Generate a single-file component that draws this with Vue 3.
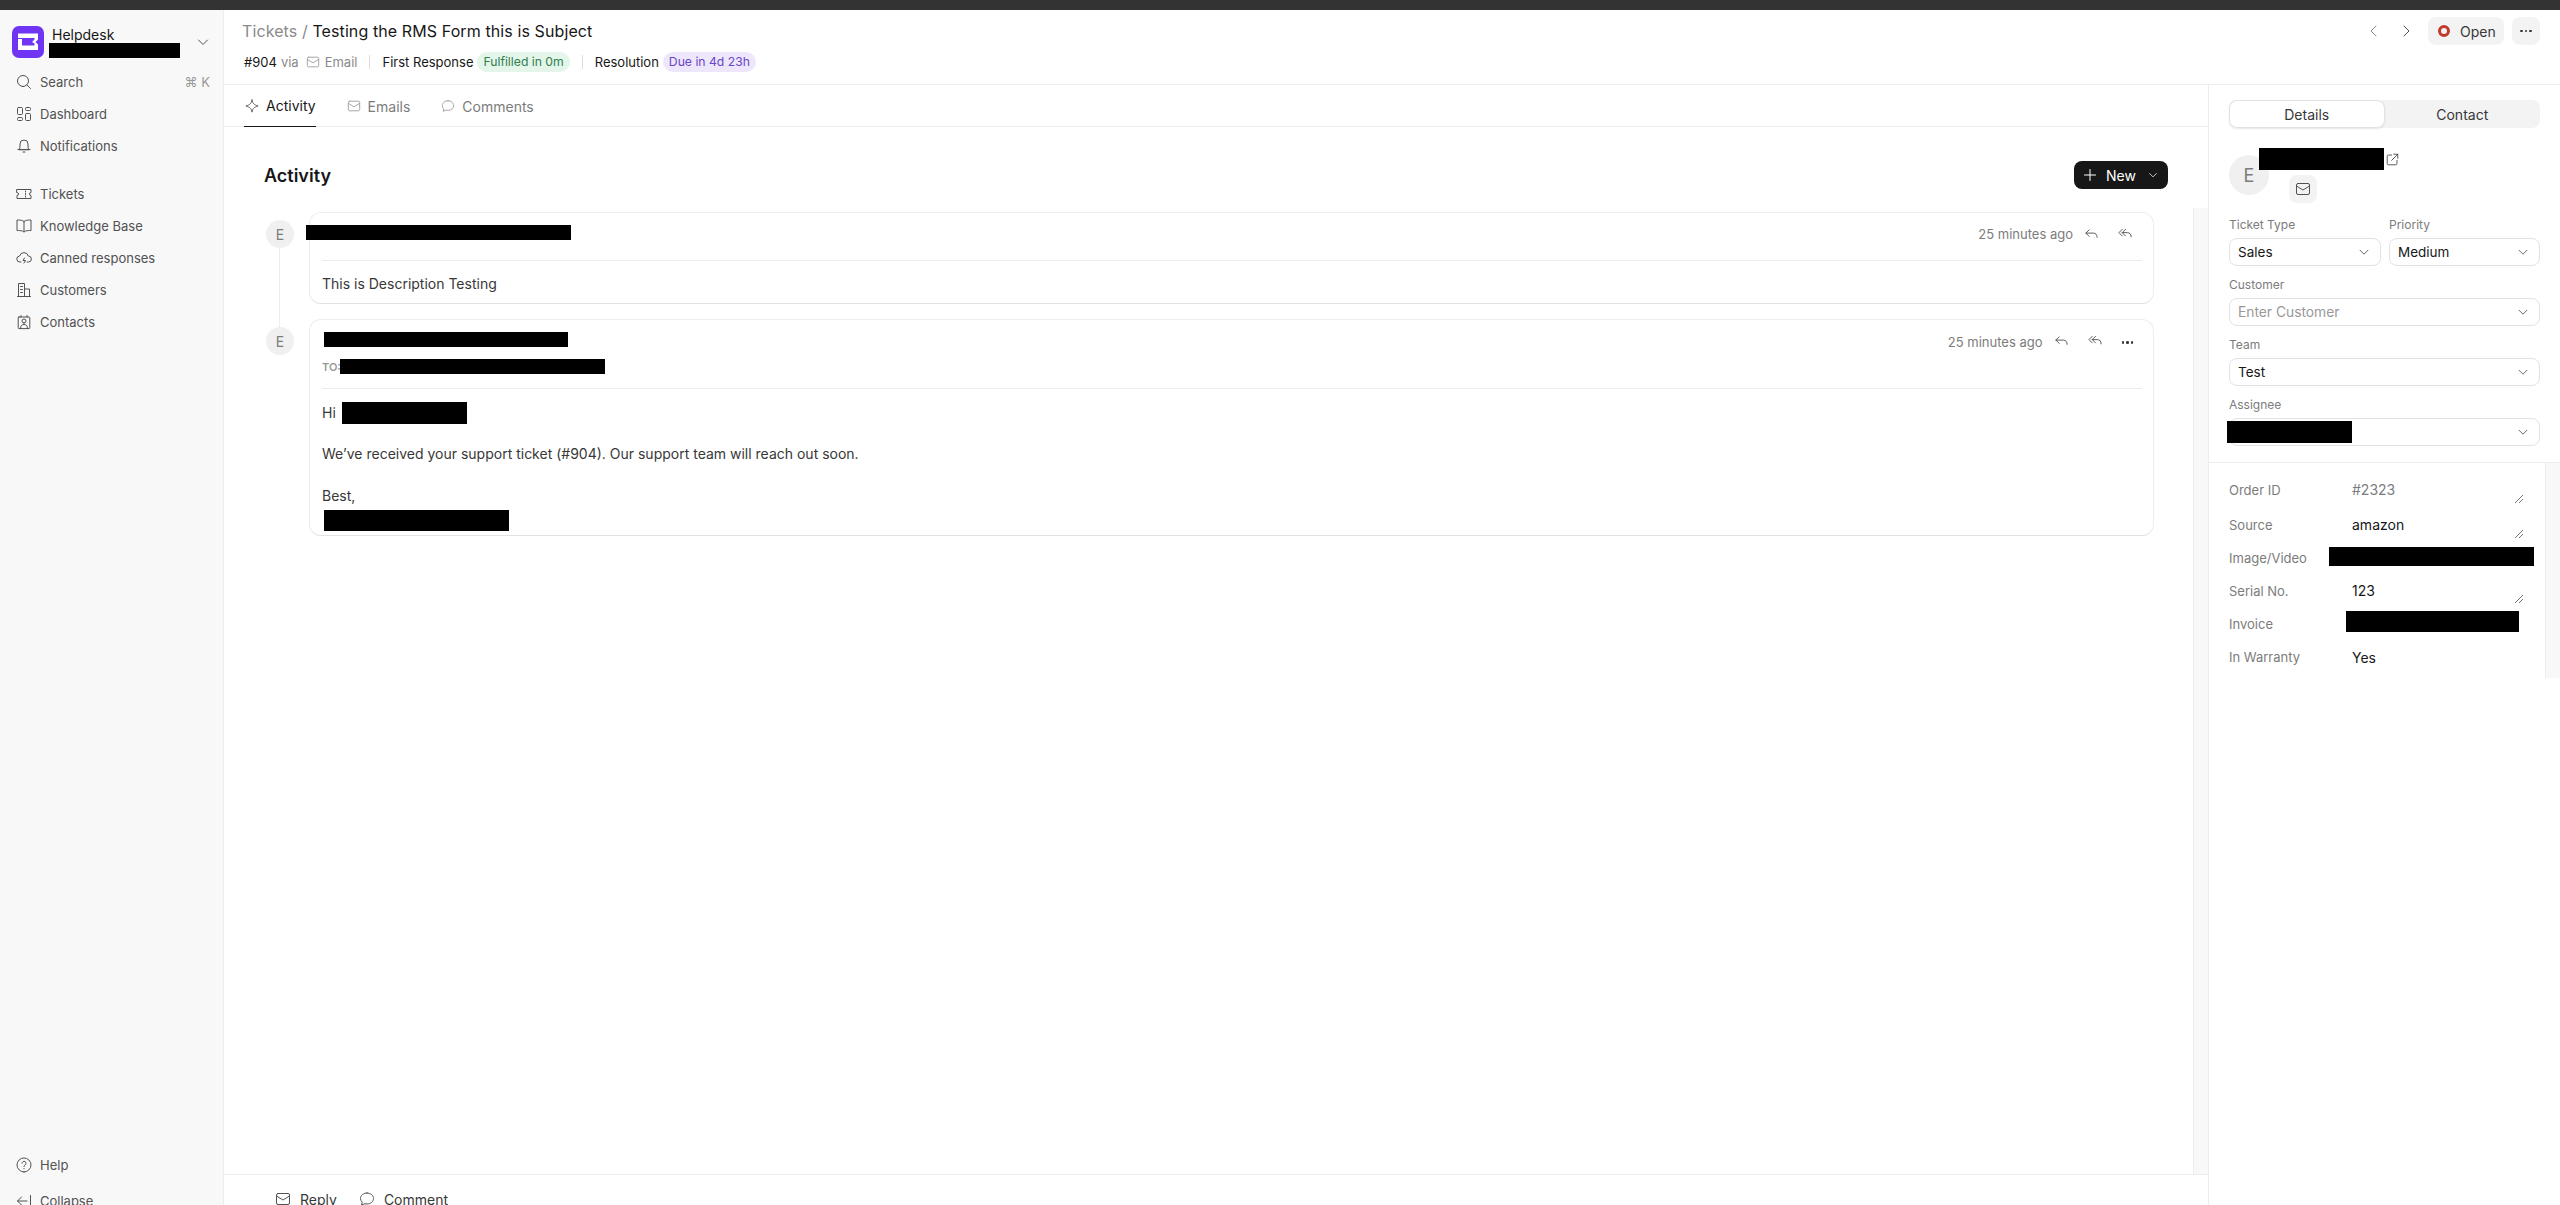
<script setup>
const icons = {
  search: "M7 12.5a5.5 5.5 0 1 0 0-11 5.5 5.5 0 0 0 0 11ZM11 11l3.5 3.5",
  dashboard: "M2.5 1.5h3a1 1 0 0 1 1 1v5a1 1 0 0 1-1 1h-3a1 1 0 0 1-1-1v-5a1 1 0 0 1 1-1ZM10.5 1.5h3a1 1 0 0 1 1 1v1a1 1 0 0 1-1 1h-3a1 1 0 0 1-1-1v-1a1 1 0 0 1 1-1ZM2.5 11.5h3a1 1 0 0 1 1 1v1a1 1 0 0 1-1 1h-3a1 1 0 0 1-1-1v-1a1 1 0 0 1 1-1ZM10.5 7.5h3a1 1 0 0 1 1 1v5a1 1 0 0 1-1 1h-3a1 1 0 0 1-1-1v-5a1 1 0 0 1 1-1Z",
  bell: "M3 11.5c.8-.8 1-1.8 1-3.5V6a4 4 0 0 1 8 0v2c0 1.7.2 2.7 1 3.5ZM2 11.5h12M7 14h2",
  ticket: "M1 3.5h14v3a1.5 1.5 0 0 0 0 3v3H1v-3a1.5 1.5 0 0 0 0-3ZM9.5 5v1M9.5 7.5v1M9.5 10v1",
  book: "M8 3.5C7 2.5 5.5 2 1 2v10.5c4.5 0 6 .5 7 1.5 1-1 2.5-1.5 7-1.5V2C10.5 2 9 2.5 8 3.5ZM8 3.5V14",
  cloud: "M5 12H4a3 3 0 0 1-.4-6A4.5 4.5 0 0 1 12.3 6a3 3 0 0 1 .2 6H11M8.5 8 7 10.5h2.5L8 13",
  building: "M2.5 14.5v-13h6v13M8.5 7h5v7.5M1.5 14.5h13M4.5 4.5h2M4.5 7.5h2M4.5 10.5h2",
  contacts: "M3 3h10a.8.8 0 0 1 .8.8v10a.8.8 0 0 1-.8.8H3a.8.8 0 0 1-.8-.8v-10A.8.8 0 0 1 3 3ZM5 1.5V3M11 1.5V3M8 9a2 2 0 1 0 0-4 2 2 0 0 0 0 4ZM4.5 14.5c0-3 1.5-4 3.5-4s3.5 1 3.5 4",
  help: "M8 15A7 7 0 1 0 8 1a7 7 0 0 0 0 14ZM6 6.2a2 2 0 1 1 3 1.8c-.7.4-1 .9-1 1.5M8 11.5v.3",
  collapse: "M14.5 2.5v11M11 8H1.5M5.5 4l-4 4 4 4",
  mail: "M3 2.5h10A1.5 1.5 0 0 1 14.5 4v8a1.5 1.5 0 0 1-1.5 1.5H3A1.5 1.5 0 0 1 1.5 12V4A1.5 1.5 0 0 1 3 2.5ZM1.5 5 8 9l6.5-4",
  comment: "M8 2c3.6 0 6.5 2.4 6.5 5.5S11.6 13 8 13c-.7 0-1.4-.1-2-.3L2.5 14l.7-2.9A5.2 5.2 0 0 1 1.5 7.5C1.5 4.4 4.4 2 8 2Z",
  sparkle: "M8 1c.5 3.8 2 5.5 7 7-5 1.5-6.5 3.2-7 7-.5-3.8-2-5.5-7-7 5-1.5 6.5-3.2 7-7Z",
  reply: "M5.5 3 2 6.5 5.5 10M2 6.5h8c2.5 0 4 1.7 4 4.5",
  replyAll: "M4.5 2.5 1 6l3.5 3.5M8 2.5 4.5 6 8 9.5M4.5 6H10c2.5 0 4 1.7 4 4.5",
  external: "M7 2.5H3A1.5 1.5 0 0 0 1.5 4v9A1.5 1.5 0 0 0 3 14.5h9a1.5 1.5 0 0 0 1.5-1.5V9M9.5 1.5h5v5M14.5 1.5 7 9",
  down: "M3.5 6 8 10.5 12.5 6",
  left: "M10 3 5 8l5 5",
  right: "M6 3l5 5-5 5",
  plus: "M8 2.5v11M2.5 8h11",
};

const topNav = [
  { label: "Dashboard", icon: "dashboard" },
  { label: "Notifications", icon: "bell" },
];
const mainNav = [
  { label: "Tickets", icon: "ticket" },
  { label: "Knowledge Base", icon: "book" },
  { label: "Canned responses", icon: "cloud" },
  { label: "Customers", icon: "building" },
  { label: "Contacts", icon: "contacts" },
];
</script>

<template>
  <div class="app">
    <div class="topbar"></div>
    <div class="layout">
      <aside class="sidebar">
        <div class="brand">
          <svg class="logo" viewBox="0 0 32 32">
            <rect width="32" height="32" rx="7" fill="#7034f5" />
            <path fill="#fff" d="M6 7.5h20v6L23.5 16l2.5 2.5V24H6V13h4v6.5h12.5v-2L20 16l2.5-2.500V12H6Z" />
          </svg>
          <div class="brand-text">
            <div class="brand-name">Helpdesk</div>
            <div class="redact brand-redact"></div>
          </div>
          <svg class="ic ic-sm" viewBox="0 0 16 16"><path :d="icons.down" /></svg>
        </div>
        <div class="nav-item">
          <svg class="ic" viewBox="0 0 16 16"><path :d="icons.search" /></svg>
          <span>Search</span>
          <span class="kbd">⌘ K</span>
        </div>
        <div v-for="n in topNav" :key="n.label" class="nav-item">
          <svg class="ic" viewBox="0 0 16 16"><path :d="icons[n.icon]" /></svg>
          <span>{{ n.label }}</span>
        </div>
        <div class="nav-group">
          <div v-for="n in mainNav" :key="n.label" class="nav-item">
            <svg class="ic" viewBox="0 0 16 16"><path :d="icons[n.icon]" /></svg>
            <span>{{ n.label }}</span>
          </div>
        </div>
        <div class="nav-bottom">
          <div class="nav-item">
            <svg class="ic" viewBox="0 0 16 16"><path :d="icons.help" /></svg>
            <span>Help</span>
          </div>
          <div class="nav-item">
            <svg class="ic" viewBox="0 0 16 16"><path :d="icons.collapse" /></svg>
            <span>Collapse</span>
          </div>
        </div>
      </aside>

      <div class="page">
        <header class="header">
          <div class="header-left">
            <div class="crumbs"><span class="muted">Tickets /</span> Testing the RMS Form this is Subject</div>
            <div class="meta">
              <span class="dark">#904</span>
              <span class="muted via">via</span>
              <svg class="ic ic-mail muted-ic" viewBox="0 0 16 16"><path :d="icons.mail" /></svg>
              <span class="muted">Email</span>
              <span class="sep"></span>
              <span class="dark">First Response</span>
              <span class="pill green">Fulfilled in 0m</span>
              <span class="sep"></span>
              <span class="dark">Resolution</span>
              <span class="pill purple">Due in 4d 23h</span>
            </div>
          </div>
          <div class="header-right">
            <svg class="ic nav-arrow light" viewBox="0 0 16 16"><path :d="icons.left" /></svg>
            <svg class="ic nav-arrow last" viewBox="0 0 16 16"><path :d="icons.right" /></svg>
            <div class="status-btn"><span class="status-dot"></span>Open</div>
            <div class="more-btn"><span class="dots"><i></i><i></i><i></i></span></div>
          </div>
        </header>

        <div class="body">
          <section class="content">
            <nav class="tabs">
              <div class="tab active">
                <svg class="ic" viewBox="0 0 16 16"><path :d="icons.sparkle" /></svg>Activity
              </div>
              <div class="tab">
                <svg class="ic muted-ic" viewBox="0 0 16 16"><path :d="icons.mail" /></svg>Emails
              </div>
              <div class="tab">
                <svg class="ic muted-ic" viewBox="0 0 16 16"><path :d="icons.comment" /></svg>Comments
              </div>
            </nav>

            <div class="scroll-wrap">
              <div class="activity">
                <div class="activity-head">
                  <h2>Activity</h2>
                  <div class="new-btn">
                    <svg class="ic" viewBox="0 0 16 16"><path :d="icons.plus" /></svg>
                    <span>New</span>
                    <svg class="ic ic-xs" viewBox="0 0 16 16"><path :d="icons.down" /></svg>
                  </div>
                </div>

                <div class="timeline">
                  <div class="entry first">
                    <div class="avatar">E</div>
                    <div class="card">
                      <div class="card-head">
                        <div class="redact from-redact-a"></div>
                        <span class="time">25 minutes ago</span>
                        <svg class="ic act" viewBox="0 0 16 16"><path :d="icons.reply" /></svg>
                        <svg class="ic act" viewBox="0 0 16 16"><path :d="icons.replyAll" /></svg>
                      </div>
                      <div class="card-body short">This is Description Testing</div>
                    </div>
                  </div>

                  <div class="entry">
                    <div class="avatar">E</div>
                    <div class="card">
                      <div class="card-head tall">
                        <div class="from-col">
                          <div class="redact from-redact-b"></div>
                          <div class="to-row"><span class="to">TO:</span><div class="redact to-redact"></div></div>
                        </div>
                        <span class="time">25 minutes ago</span>
                        <svg class="ic act" viewBox="0 0 16 16"><path :d="icons.reply" /></svg>
                        <svg class="ic act" viewBox="0 0 16 16"><path :d="icons.replyAll" /></svg>
                        <span class="dots act-dots"><i></i><i></i><i></i></span>
                      </div>
                      <div class="card-body">
                        <div class="hi-row"><span class="hi">Hi</span><div class="redact hi-redact"></div></div>
                        <p>We’ve received your support ticket (#904). Our support team will reach out soon.</p>
                        <p class="best">Best,</p>
                        <div class="redact sign-redact"></div>
                      </div>
                    </div>
                  </div>
                </div>
              </div>
              <div class="track"></div>
            </div>

            <footer class="composer">
              <div class="composer-btn">
                <svg class="ic" viewBox="0 0 16 16"><path :d="icons.mail" /></svg>Reply
              </div>
              <div class="composer-btn">
                <svg class="ic" viewBox="0 0 16 16"><path :d="icons.comment" /></svg>Comment
              </div>
            </footer>
          </section>

          <aside class="details">
            <div class="details-top">
              <div class="switch">
                <div class="switch-item on">Details</div>
                <div class="switch-item">Contact</div>
              </div>
              <div class="contact">
                <div class="contact-avatar">E</div>
                <div class="contact-main">
                  <div class="contact-name">
                    <div class="redact name-redact"></div>
                    <svg class="ic ic-ext" viewBox="0 0 16 16"><path :d="icons.external" /></svg>
                  </div>
                  <div class="mail-btn">
                    <svg class="ic" viewBox="0 0 16 16"><path :d="icons.mail" /></svg>
                  </div>
                </div>
              </div>
              <div class="form-grid">
                <label class="field">
                  <span class="label">Ticket Type</span>
                  <div class="select"><span>Sales</span><svg class="ic ic-sel" viewBox="0 0 16 16"><path :d="icons.down" /></svg></div>
                </label>
                <label class="field">
                  <span class="label">Priority</span>
                  <div class="select"><span>Medium</span><svg class="ic ic-sel" viewBox="0 0 16 16"><path :d="icons.down" /></svg></div>
                </label>
                <label class="field wide">
                  <span class="label">Customer</span>
                  <div class="select"><span class="placeholder">Enter Customer</span><svg class="ic ic-sel" viewBox="0 0 16 16"><path :d="icons.down" /></svg></div>
                </label>
                <label class="field wide">
                  <span class="label">Team</span>
                  <div class="select"><span>Test</span><svg class="ic ic-sel" viewBox="0 0 16 16"><path :d="icons.down" /></svg></div>
                </label>
                <label class="field wide">
                  <span class="label">Assignee</span>
                  <div class="select">
                    <div class="redact assignee-redact"></div>
                    <svg class="ic ic-sel" viewBox="0 0 16 16"><path :d="icons.down" /></svg>
                  </div>
                </label>
              </div>
            </div>

            <div class="details-list">
              <div class="rows">
                <div class="row r-order">
                  <span class="label">Order ID</span><span class="value faded">#2323</span>
                  <span class="grip"></span>
                </div>
                <div class="row r-source">
                  <span class="label">Source</span><span class="value">amazon</span>
                  <span class="grip"></span>
                </div>
                <div class="row r-image">
                  <span class="label">Image/Video</span>
                  <div class="redact image-redact"></div>
                </div>
                <div class="row r-serial">
                  <span class="label">Serial No.</span><span class="value">123</span>
                  <span class="grip"></span>
                </div>
                <div class="row r-invoice">
                  <span class="label">Invoice</span>
                  <div class="redact invoice-redact"></div>
                </div>
                <div class="row r-warranty">
                  <span class="label">In Warranty</span><span class="value">Yes</span>
                </div>
              </div>
              <div class="list-track"></div>
            </div>
          </aside>
        </div>
      </div>
    </div>
  </div>
</template>

<style>
html,
body {
  margin: 0;
  height: 100%;
  overflow: hidden;
  background: #fff;
}
</style>

<style scoped>
* {
  box-sizing: border-box;
}

.app {
  height: 1205px;
  overflow: hidden;
  font-family: Inter, "Liberation Sans", sans-serif;
  font-size: 13px;
  color: #383838;
}

.topbar {
  height: 10px;
  background: #333;
}

.layout {
  display: flex;
  height: 1207px;
}

.ic {
  width: 16px;
  height: 16px;
  flex: none;
  fill: none;
  stroke: #525252;
  stroke-width: 1;
  stroke-linecap: round;
  stroke-linejoin: round;
}

.redact {
  background: #000;
  flex: none;
}

/* sidebar */
.sidebar {
  width: 224px;
  flex: none;
  display: flex;
  flex-direction: column;
  background: #f8f8f8;
  border-right: 1px solid #ededed;
  padding: 16px 8px 0;
}

.brand {
  display: flex;
  align-items: flex-start;
  height: 40px;
  margin: 0 0 0 4px;
}

.logo {
  width: 32px;
  height: 32px;
  flex: none;
}

.brand-text {
  margin-left: 5px;
  width: 131px;
}

.brand-name {
  margin: 0 0 0 3px;
  font-size: 14px;
  line-height: 17px;
  color: #171717;
}

.brand-redact {
  width: 131px;
  height: 15px;
}

.ic-sm {
  margin: 8px 0 0 15px;
}

.nav-item {
  display: flex;
  align-items: center;
  height: 32px;
  padding-left: 8px;
  gap: 8px;
  color: #525252;
}

.kbd {
  margin-left: auto;
  margin-right: 5px;
  color: #999;
}

.nav-group {
  margin-top: 16px;
}

.nav-bottom {
  margin-top: auto;
  display: flex;
  flex-direction: column;
  gap: 4px;
}

/* page */
.page {
  flex: 1;
  min-width: 0;
  display: flex;
  flex-direction: column;
}

.header {
  height: 75px;
  flex: none;
  display: flex;
  justify-content: space-between;
  border-bottom: 1px solid #ededed;
  padding: 0 20px 0 18px;
}

.crumbs {
  margin-top: 11px;
  font-size: 16px;
  line-height: 20px;
  letter-spacing: 0.1px;
  color: #171717;
}

.muted {
  color: #8a8a8a;
}

.meta {
  display: flex;
  align-items: center;
  margin: 11px 0 0 2px;
  height: 20px;
  font-size: 13px;
}

.dark {
  color: #171717;
}

.via {
  margin-left: 4px;
}

.ic-mail {
  margin: 0 5px 0 7px;
  width: 14px;
  height: 14px;
}

.muted-ic {
  stroke: #999;
}

.sep {
  width: 1px;
  height: 14px;
  background: #ddd;
  margin: 0 12px;
}

.pill {
  height: 20px;
  line-height: 20px;
  padding: 0 6px;
  border-radius: 10px;
  margin-left: 4px;
  font-size: 12.2px;
}

.green {
  background: #e4f5e9;
  color: #30804f;
}

.purple {
  background: #eee7fc;
  color: #6846c6;
}

.header-right {
  display: flex;
  align-items: center;
  height: 28px;
  margin-top: 7px;
}

.nav-arrow {
  margin-right: 16px;
}

.nav-arrow.last {
  margin-right: 14px;
}

.light {
  stroke: #8a8a8a;
}

.status-btn {
  display: flex;
  align-items: center;
  gap: 10px;
  width: 76px;
  height: 28px;
  padding-left: 10px;
  border-radius: 8px;
  background: #f3f3f3;
  font-size: 14px;
}

.status-dot {
  width: 12px;
  height: 12px;
  border-radius: 50%;
  border: 3px solid #c0392b;
}

.more-btn {
  display: flex;
  align-items: center;
  justify-content: center;
  width: 28px;
  height: 28px;
  margin-left: 8px;
  border-radius: 8px;
  background: #f3f3f3;
}

.dots {
  display: flex;
  gap: 2px;
}

.dots i {
  width: 2.5px;
  height: 2.5px;
  border-radius: 50%;
  background: #383838;
}

.body {
  flex: 1;
  display: flex;
  min-height: 0;
}

.content {
  flex: 1;
  min-width: 0;
  display: flex;
  flex-direction: column;
}

.tabs {
  height: 42px;
  flex: none;
  display: flex;
  gap: 30px;
  padding-left: 20px;
  border-bottom: 1px solid #ededed;
}

.tab {
  display: flex;
  align-items: center;
  gap: 7px;
  height: 42px;
  font-size: 14px;
  color: #7c7c7c;
}

.tab .ic {
  width: 14px;
  height: 14px;
  margin-left: 1px;
}

.tab.active {
  color: #171717;
  border-bottom: 1px solid #171717;
}

.scroll-wrap {
  flex: 1;
  min-height: 0;
  display: flex;
}

.activity {
  flex: 1;
  min-width: 0;
  padding: 0 24px 0 40px;
}

.activity-head {
  display: flex;
  align-items: center;
  justify-content: space-between;
  height: 85px;
  padding: 11px 1px 0 0;
}

.activity-head h2 {
  margin: 0;
  font-size: 18px;
  font-weight: 600;
  color: #171717;
}

.new-btn {
  display: flex;
  align-items: center;
  width: 94px;
  height: 28px;
  padding-left: 8px;
  gap: 8px;
  border-radius: 8px;
  background: #171717;
  color: #fff;
  font-size: 14px;
}

.new-btn .ic {
  stroke: #fff;
}

.new-btn .ic-xs {
  width: 12px;
  height: 12px;
  margin-left: 3px;
}

.timeline {
  margin-right: 15px;
}

.entry {
  display: flex;
  gap: 15px;
  position: relative;
}

.entry.first {
  margin-bottom: 15px;
}

.entry.first::after {
  content: "";
  position: absolute;
  left: 15px;
  top: 36px;
  height: 79px;
  width: 1px;
  background: #ededed;
}

.avatar {
  width: 28px;
  height: 28px;
  flex: none;
  margin: 8px 0 0 2px;
  border-radius: 50%;
  background: #f0f0f0;
  color: #7c7c7c;
  display: flex;
  align-items: center;
  justify-content: center;
  font-size: 14px;
}

.card {
  flex: 1;
  min-width: 0;
  border: 1px solid #ededed;
  border-bottom-color: #e2e2e2;
  border-radius: 12px;
  padding: 0 11px 0 12px;
}

.card-head {
  display: flex;
  align-items: center;
  height: 48px;
  padding-bottom: 5px;
  border-bottom: 1px solid #ededed;
}

.card-head.tall {
  height: 69px;
  align-items: flex-start;
  padding: 12px 0 0;
}

.from-redact-a {
  width: 265px;
  height: 15px;
  margin: 0 0 3px -16px;
}

.from-col {
  display: flex;
  flex-direction: column;
  gap: 12px;
}

.from-redact-b {
  width: 244px;
  height: 15px;
  margin-left: 2px;
}

.to-row {
  display: flex;
  align-items: center;
  height: 15px;
}

.to {
  width: 18px;
  font-size: 11px;
  font-weight: 600;
  color: #999;
  overflow: hidden;
}

.to-redact {
  width: 265px;
  height: 15px;
}

.time {
  margin-left: auto;
  font-size: 13px;
  color: #7c7c7c;
}

.tall .time {
  line-height: 20px;
}

.act {
  margin-left: 19px;
  width: 15px;
  height: 15px;
}

.time + .act {
  margin-left: 11px;
}

.tall .act {
  margin-top: 2px;
}

.act-dots {
  margin: 9px 9px 0 19px;
}

.card-head:not(.tall) .act:last-child {
  margin-right: 9px;
}

.card-body {
  padding: 0 0 4px;
  font-size: 14px;
  line-height: 21px;
  color: #383838;
}

.card-body.short {
  height: 42px;
  padding: 12px 0 0;
}

.card-body p {
  margin: 0;
}

.hi-row {
  display: flex;
  align-items: center;
  height: 22px;
  margin-top: 13px;
  margin-bottom: 19px;
}

.hi {
  width: 20px;
  flex: none;
  margin-top: -2px;
}

.hi-redact {
  width: 125px;
  height: 22px;
}

.card-body .best {
  margin-top: 21px;
}

.sign-redact {
  width: 185px;
  height: 21px;
  margin: 4px 0 0 2px;
}

.track {
  width: 15px;
  flex: none;
  margin-top: 81px;
  background: #f8f8f8;
  border-left: 1px solid #ededed;
}

.composer {
  height: 43px;
  flex: none;
  display: flex;
  align-items: center;
  gap: 22px;
  padding: 6px 0 0 51px;
  border-top: 1px solid #ededed;
  font-size: 14px;
}

.composer-btn {
  display: flex;
  align-items: center;
  gap: 9px;
  color: #383838;
}

/* right panel */
.details {
  width: 352px;
  flex: none;
  border-left: 1px solid #ededed;
}

.details-top {
  padding: 15px 20px 16px 20px;
  border-bottom: 1px solid #ededed;
}

.switch {
  display: flex;
  height: 28px;
  background: #f3f3f3;
  border-radius: 8px;
}

.switch-item {
  flex: 1;
  display: flex;
  align-items: center;
  justify-content: center;
  font-size: 14px;
}

.switch-item.on {
  background: #fff;
  border-radius: 8px;
  box-shadow: 0 0 0 1px #e2e2e2 inset, 0 1px 2px rgba(0, 0, 0, 0.1);
}

.contact {
  display: flex;
  margin-top: 20px;
  height: 56px;
}

.contact-avatar {
  width: 40px;
  height: 40px;
  margin-top: 7px;
  border-radius: 50%;
  flex: none;
  background: #f0f0f0;
  color: #7c7c7c;
  display: flex;
  align-items: center;
  justify-content: center;
  font-size: 18px;
}

.contact-main {
  margin-left: -10px;
}

.contact-name {
  display: flex;
  align-items: center;
  height: 22px;
}

.name-redact {
  width: 125px;
  height: 22px;
}

.ic-ext {
  width: 13px;
  height: 13px;
  margin-left: 2px;
  stroke: #383838;
}

.mail-btn {
  width: 28px;
  height: 28px;
  margin: 5px 0 0 30px;
  border-radius: 8px;
  background: #f3f3f3;
  display: flex;
  align-items: center;
  justify-content: center;
}

.form-grid {
  display: grid;
  grid-template-columns: 152px 151px;
  column-gap: 8px;
  row-gap: 12px;
  margin-top: 14px;
}

.field {
  display: flex;
  flex-direction: column;
}

.wide {
  grid-column: 1 / 3;
}

.label {
  font-size: 12px;
  line-height: 16px;
  color: #7c7c7c;
}

.field .label {
  height: 20px;
  line-height: 14px;
}

.select {
  display: flex;
  align-items: center;
  justify-content: space-between;
  height: 28px;
  padding: 0 9px 0 8px;
  border: 1px solid #e2e2e2;
  border-radius: 8px;
  background: #fff;
  font-size: 13.5px;
  color: #171717;
}

.placeholder {
  color: #999;
  font-size: 13.8px;
}

.ic-sel {
  width: 14px;
  height: 14px;
}

.assignee-redact {
  width: 125px;
  height: 22px;
  margin-left: -11px;
}

.details-list {
  display: flex;
  height: 215px;
}

.rows {
  flex: 1;
  padding: 0 0 0 20px;
}

.row {
  display: flex;
  align-items: center;
  position: relative;
}

.row .label {
  width: 123px;
  flex: none;
  font-size: 13px;
}

.value {
  font-size: 14px;
  color: #171717;
}

.faded {
  color: #7c7c7c;
}

.r-order {
  height: 35px;
  margin-top: 9px;
}

.r-source {
  height: 35px;
}

.r-image {
  height: 32px;
}

.r-serial {
  height: 33px;
}

.r-invoice {
  height: 33px;
}

.r-warranty {
  height: 34px;
}

.grip {
  position: absolute;
  right: 22px;
  bottom: 4px;
  width: 8px;
  height: 8px;
  background: linear-gradient(135deg, transparent 45%, #777 45%, #777 55%, transparent 55%, transparent 70%, #777 70%, #777 80%, transparent 80%);
}

.image-redact {
  width: 205px;
  height: 19px;
  margin: 0 0 3px -23px;
}

.invoice-redact {
  width: 173px;
  height: 21px;
  margin: 0 0 5px -6px;
}

.list-track {
  width: 15px;
  flex: none;
  background: #f8f8f8;
  border-left: 1px solid #ededed;
}
</style>
